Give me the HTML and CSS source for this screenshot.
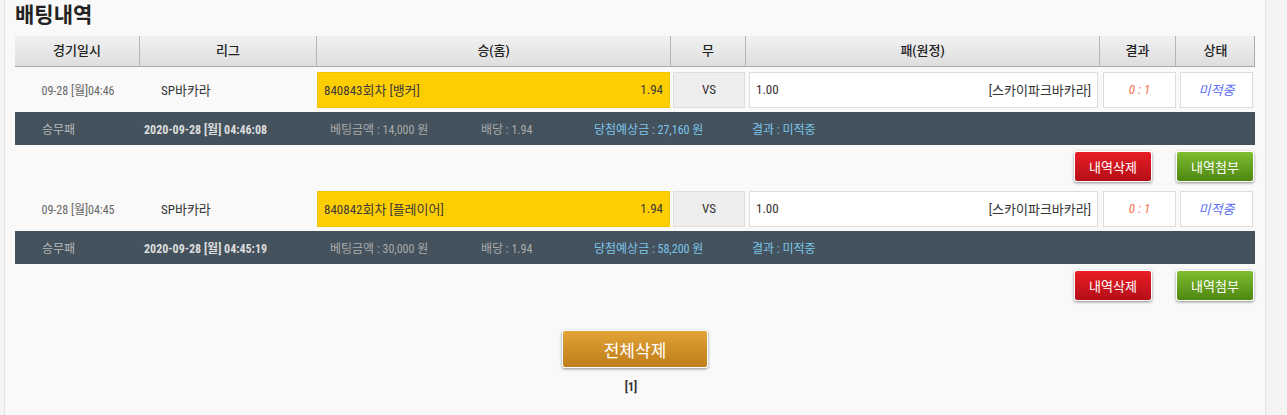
FILE: index.html
```html
<!DOCTYPE html>
<html lang="ko">
<head>
    <meta charset="UTF-8">
    <title>배팅내역</title>
    <link rel="stylesheet" href="styles.css">
</head>
<body>
    <div class="wrap">
        <h2 class="title">배팅내역</h2>

        <div class="bet-table">
            <div class="head">
                <div>경기일시</div>
                <div>리그</div>
                <div>승(홈)</div>
                <div>무</div>
                <div>패(원정)</div>
                <div>결과</div>
                <div>상태</div>
            </div>

            <!-- 첫번째 배팅 -->
            <div class="row">
                <div class="date">09-28 [월]04:46</div>
                <div class="league">SP바카라</div>
                <div class="box home selected"><span>840843회차 [뱅커]</span><span>1.94</span></div>
                <div class="box draw">VS</div>
                <div class="box away"><span>1.00</span><span>[스카이파크바카라]</span></div>
                <div class="box score">0 : 1</div>
                <div class="box status">미적중</div>
            </div>
            <div class="info">
                <span class="kind">승무패</span>
                <span class="time">2020-09-28 [월] 04:46:08</span>
                <span class="amount">베팅금액 : 14,000 원</span>
                <span class="odds">배당 : 1.94</span>
                <span class="win">당첨예상금 : 27,160 원</span>
                <span class="res">결과 : 미적중</span>
            </div>
            <div class="actions">
                <button class="btn red">내역삭제</button>
                <button class="btn green">내역첨부</button>
            </div>

            <!-- 두번째 배팅 -->
            <div class="row">
                <div class="date">09-28 [월]04:45</div>
                <div class="league">SP바카라</div>
                <div class="box home selected"><span>840842회차 [플레이어]</span><span>1.94</span></div>
                <div class="box draw">VS</div>
                <div class="box away"><span>1.00</span><span>[스카이파크바카라]</span></div>
                <div class="box score">0 : 1</div>
                <div class="box status">미적중</div>
            </div>
            <div class="info">
                <span class="kind">승무패</span>
                <span class="time">2020-09-28 [월] 04:45:19</span>
                <span class="amount">베팅금액 : 30,000 원</span>
                <span class="odds">배당 : 1.94</span>
                <span class="win">당첨예상금 : 58,200 원</span>
                <span class="res">결과 : 미적중</span>
            </div>
            <div class="actions">
                <button class="btn red">내역삭제</button>
                <button class="btn green">내역첨부</button>
            </div>
        </div>

        <div class="bottom">
            <button class="btn gold">전체삭제</button>
            <div class="paging">[1]</div>
        </div>
    </div>
</body>
</html>
```

FILE: styles.css
```css
body {
    margin: 0;
    background-color: #f3f3f3;
    font-family: Roboto, "Noto Sans CJK KR", sans-serif;
    font-size: 13px;
    font-stretch: 80%;
    color: #333;
}
.wrap {
    margin-left: 4px;
    width: 1240px;
    height: 415px;
    padding: 0 10px;
    background-color: #f9f9f9;
    border-left: 1px solid #e2e2e2;
    border-right: 1px solid #e2e2e2;
}
.title {
    margin: 0;
    padding-top: 2px;
    height: 34px;
    font-size: 21px;
    font-weight: bold;
    color: #222;
    line-height: 26px;
}
.bet-table {
    width: 1240px;
}
.head,
.row {
    display: grid;
    grid-template-columns: 125px 177px 354px 75px 354px 76px 79px;
}
.head {
    box-sizing: border-box;
    height: 31px;
    background: linear-gradient(#f1f1f1, #dedede);
    border-bottom: 1px solid #aaa;
    border-right: 1px solid #aaa;
}
.head div {
    text-align: center;
    line-height: 30px;
    border-right: 1px solid #b5b5b5;
    color: #222;
    font-weight: 500;
}
.head div:last-child {
    border-right: none;
}
.row {
    height: 45px;
    align-items: center;
}
.date {
    text-align: center;
    font-size: 12px;
    color: #666;
    padding-left: 1px;
}
.league {
    padding-left: 21px;
    color: #333;
}
.box {
    height: 36px;
    box-sizing: border-box;
    border: 1px solid #ddd;
    background-color: #fff;
    display: flex;
    align-items: center;
    justify-content: space-between;
    padding: 0 6px;
    color: #333;
}
.home {
    margin-right: 1px;
}
.selected {
    background-color: #ffce00;
    border-color: #f4c400;
    color: #3a3a3a;
}
.draw {
    justify-content: center;
    background-color: #eee;
    margin: 0 1px 0 2px;
}
.away {
    margin: 0 2px 0 3px;
}
.score,
.status {
    justify-content: center;
    font-style: italic;
}
.score {
    margin: 0 0 0 3px;
    color: #f5734f;
}
.status {
    margin: 0 2px 0 4px;
    color: #5b6ff7;
}
.info {
    height: 33px;
    background-color: #43525d;
    display: flex;
    align-items: center;
    font-size: 12px;
    color: #b8b8b8;
}
.info span {
    flex: none;
}
.kind {
    width: 102px;
    padding-left: 27px;
}
.time {
    width: 186px;
    font-weight: bold;
    color: #ddd;
}
.amount {
    width: 151px;
    color: #aaa;
}
.odds {
    width: 113px;
    color: #aaa;
}
.win {
    width: 158px;
    color: #7dc4ea;
}
.res {
    color: #7dc4ea;
}
.actions {
    display: flex;
    justify-content: flex-end;
    gap: 24px;
    padding: 6px 1px 4px 0;
}
.btn {
    width: 78px;
    height: 31px;
    border: 1px solid #fff;
    border-radius: 3px;
    color: #fff;
    font-family: inherit;
    font-size: 13px;
    box-shadow: 0 1px 3px rgba(0, 0, 0, 0.45);
    cursor: pointer;
}
.red {
    background: linear-gradient(#e91d25, #b40f18);
}
.green {
    background: linear-gradient(#7fbd2f, #4d8711);
}
.bottom {
    text-align: center;
    padding-top: 25px;
}
.gold {
    width: 146px;
    height: 38px;
    font-size: 17px;
    background: linear-gradient(#e1a235, #bf7e1b);
}
.paging {
    margin-top: 12px;
    font-size: 12px;
    font-weight: bold;
    color: #333;
    padding-right: 8px;
}
```
